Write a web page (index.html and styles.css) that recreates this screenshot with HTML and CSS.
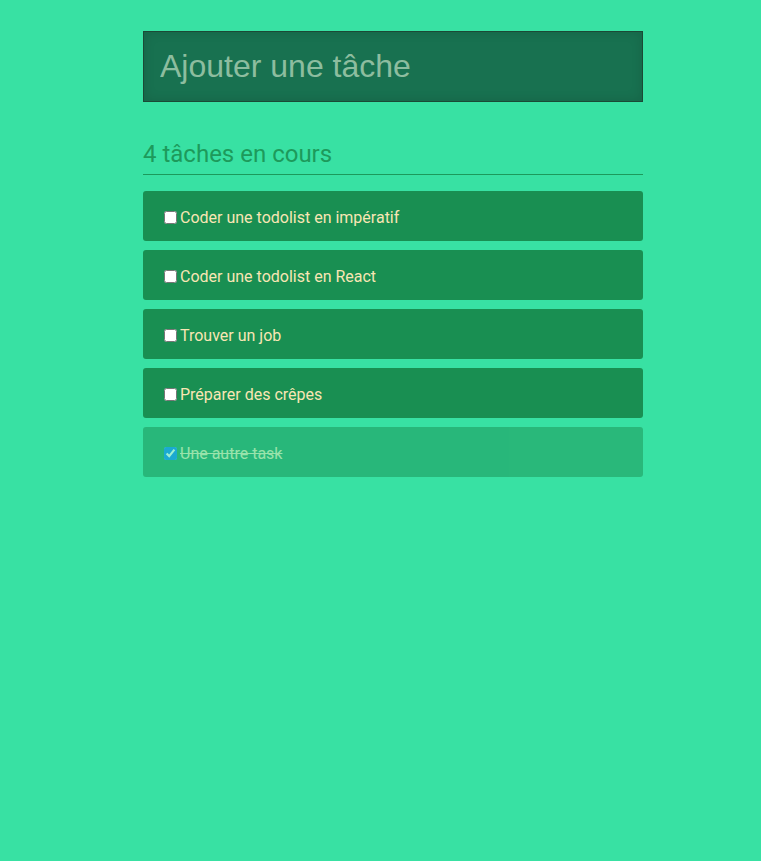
FILE: index.html
```html
<!DOCTYPE html>
<html lang="fr">
<head>
<meta charset="utf-8">
<title>Todolist</title>
<link rel="stylesheet" href="styles.css">
</head>
<body>
<main class="app">
  <input class="new-task" type="text" placeholder="Ajouter une tâche">
  <h2 class="counter">4 tâches en cours</h2>
  <ul class="tasks">
    <li class="task"><label><input type="checkbox">Coder une todolist en impératif</label></li>
    <li class="task"><label><input type="checkbox">Coder une todolist en React</label></li>
    <li class="task"><label><input type="checkbox">Trouver un job</label></li>
    <li class="task"><label><input type="checkbox">Préparer des crêpes</label></li>
    <li class="task task--done"><label><input type="checkbox" checked>Une autre task</label></li>
  </ul>
</main>
</body>
</html>
```
FILE: styles.css
```css
html, body {
  margin: 0;
  padding: 0;
  background: #38e1a3;
  min-height: 100%;
}
body {
  font-family: Roboto, "Liberation Sans", sans-serif;
  padding-left: 25px;
}
.app {
  width: 500px;
  margin: 0 auto;
  padding-top: 31px;
}
.new-task {
  display: block;
  box-sizing: border-box;
  width: 100%;
  height: 71px;
  margin: 0;
  padding: 0 16px;
  border: 1px solid #1b4a36;
  background: #187150;
  box-shadow: inset 0 0 12px rgba(0,0,0,0.12);
  font-family: "Liberation Sans", Arial, sans-serif;
  font-size: 32px;
  color: #d8f0e0;
  outline: none;
}
.new-task::placeholder {
  color: #8dbd9f;
}
.counter {
  margin: 38px 0 16px;
  padding-bottom: 6px;
  border-bottom: 1px solid #1c9a5b;
  font-size: 24px;
  font-weight: 400;
  line-height: 28px;
  color: #1d9a5b;
}
.tasks {
  list-style: none;
  margin: 0;
  padding: 0;
  display: flex;
  flex-direction: column;
  gap: 9px;
}
.task {
  box-sizing: border-box;
  display: flex;
  align-items: center;
  height: 50px;
  padding: 2px 0 0 17px;
  border-radius: 3px;
  background: #198f52;
  color: #f8e6b4;
  font-size: 16px;
}
.task label {
  display: flex;
  align-items: center;
}
.task input {
  width: 13px;
  height: 13px;
  margin: 0 3px 0 4px;
}
.task--done {
  opacity: 0.5;
}
.task--done label {
  text-decoration: line-through;
}
```
